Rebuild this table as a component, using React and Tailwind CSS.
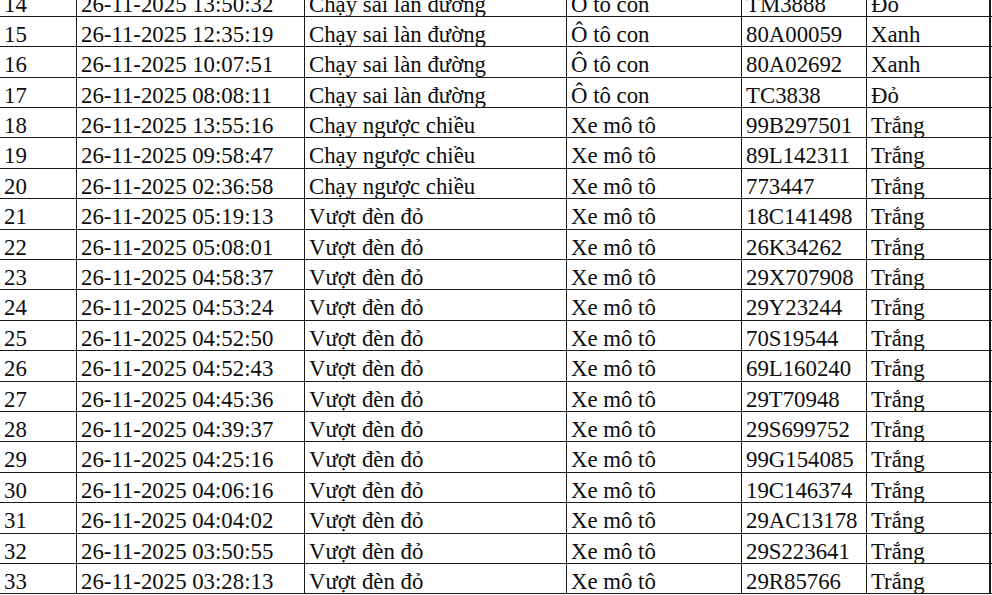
import React from 'react';

const rows = [
    ['14', '26-11-2025 13:50:32', 'Chạy sai làn đường', 'Ô tô con', 'TM3888', 'Đỏ'],
    ['15', '26-11-2025 12:35:19', 'Chạy sai làn đường', 'Ô tô con', '80A00059', 'Xanh'],
    ['16', '26-11-2025 10:07:51', 'Chạy sai làn đường', 'Ô tô con', '80A02692', 'Xanh'],
    ['17', '26-11-2025 08:08:11', 'Chạy sai làn đường', 'Ô tô con', 'TC3838', 'Đỏ'],
    ['18', '26-11-2025 13:55:16', 'Chạy ngược chiều', 'Xe mô tô', '99B297501', 'Trắng'],
    ['19', '26-11-2025 09:58:47', 'Chạy ngược chiều', 'Xe mô tô', '89L142311', 'Trắng'],
    ['20', '26-11-2025 02:36:58', 'Chạy ngược chiều', 'Xe mô tô', '773447', 'Trắng'],
    ['21', '26-11-2025 05:19:13', 'Vượt đèn đỏ', 'Xe mô tô', '18C141498', 'Trắng'],
    ['22', '26-11-2025 05:08:01', 'Vượt đèn đỏ', 'Xe mô tô', '26K34262', 'Trắng'],
    ['23', '26-11-2025 04:58:37', 'Vượt đèn đỏ', 'Xe mô tô', '29X707908', 'Trắng'],
    ['24', '26-11-2025 04:53:24', 'Vượt đèn đỏ', 'Xe mô tô', '29Y23244', 'Trắng'],
    ['25', '26-11-2025 04:52:50', 'Vượt đèn đỏ', 'Xe mô tô', '70S19544', 'Trắng'],
    ['26', '26-11-2025 04:52:43', 'Vượt đèn đỏ', 'Xe mô tô', '69L160240', 'Trắng'],
    ['27', '26-11-2025 04:45:36', 'Vượt đèn đỏ', 'Xe mô tô', '29T70948', 'Trắng'],
    ['28', '26-11-2025 04:39:37', 'Vượt đèn đỏ', 'Xe mô tô', '29S699752', 'Trắng'],
    ['29', '26-11-2025 04:25:16', 'Vượt đèn đỏ', 'Xe mô tô', '99G154085', 'Trắng'],
    ['30', '26-11-2025 04:06:16', 'Vượt đèn đỏ', 'Xe mô tô', '19C146374', 'Trắng'],
    ['31', '26-11-2025 04:04:02', 'Vượt đèn đỏ', 'Xe mô tô', '29AC13178', 'Trắng'],
    ['32', '26-11-2025 03:50:55', 'Vượt đèn đỏ', 'Xe mô tô', '29S223641', 'Trắng'],
    ['33', '26-11-2025 03:28:13', 'Vượt đèn đỏ', 'Xe mô tô', '29R85766', 'Trắng'],
];

// column widths incl. the right border line
const cols = ['w-[77px]', 'w-[228px]', 'w-[262px]', 'w-[175px]', 'w-[125px]', 'w-[124px] border-r-2'];

export default function App() {
    return (
        <div className="h-screen w-full overflow-hidden bg-white">
            {/* table is scrolled: row 14 is cut by the top edge */}
            <div
                className="-mt-[13.5px] text-[22.8px] leading-[22px] text-[#0d0d0d]"
                style={{ fontFamily: '"Liberation Serif", "Times New Roman", serif' }}
            >
                {rows.map((row) => (
                    <div key={row[0]} className="flex h-[30.4px] border-b border-[#1a1a1a]">
                        {row.map((cell, i) => (
                            <div
                                key={i}
                                className={`${cols[i]} shrink-0 border-r border-[#1a1a1a] pl-[4px] pt-[7px] whitespace-nowrap`}
                            >
                                {cell}
                            </div>
                        ))}
                    </div>
                ))}
            </div>
        </div>
    );
}
